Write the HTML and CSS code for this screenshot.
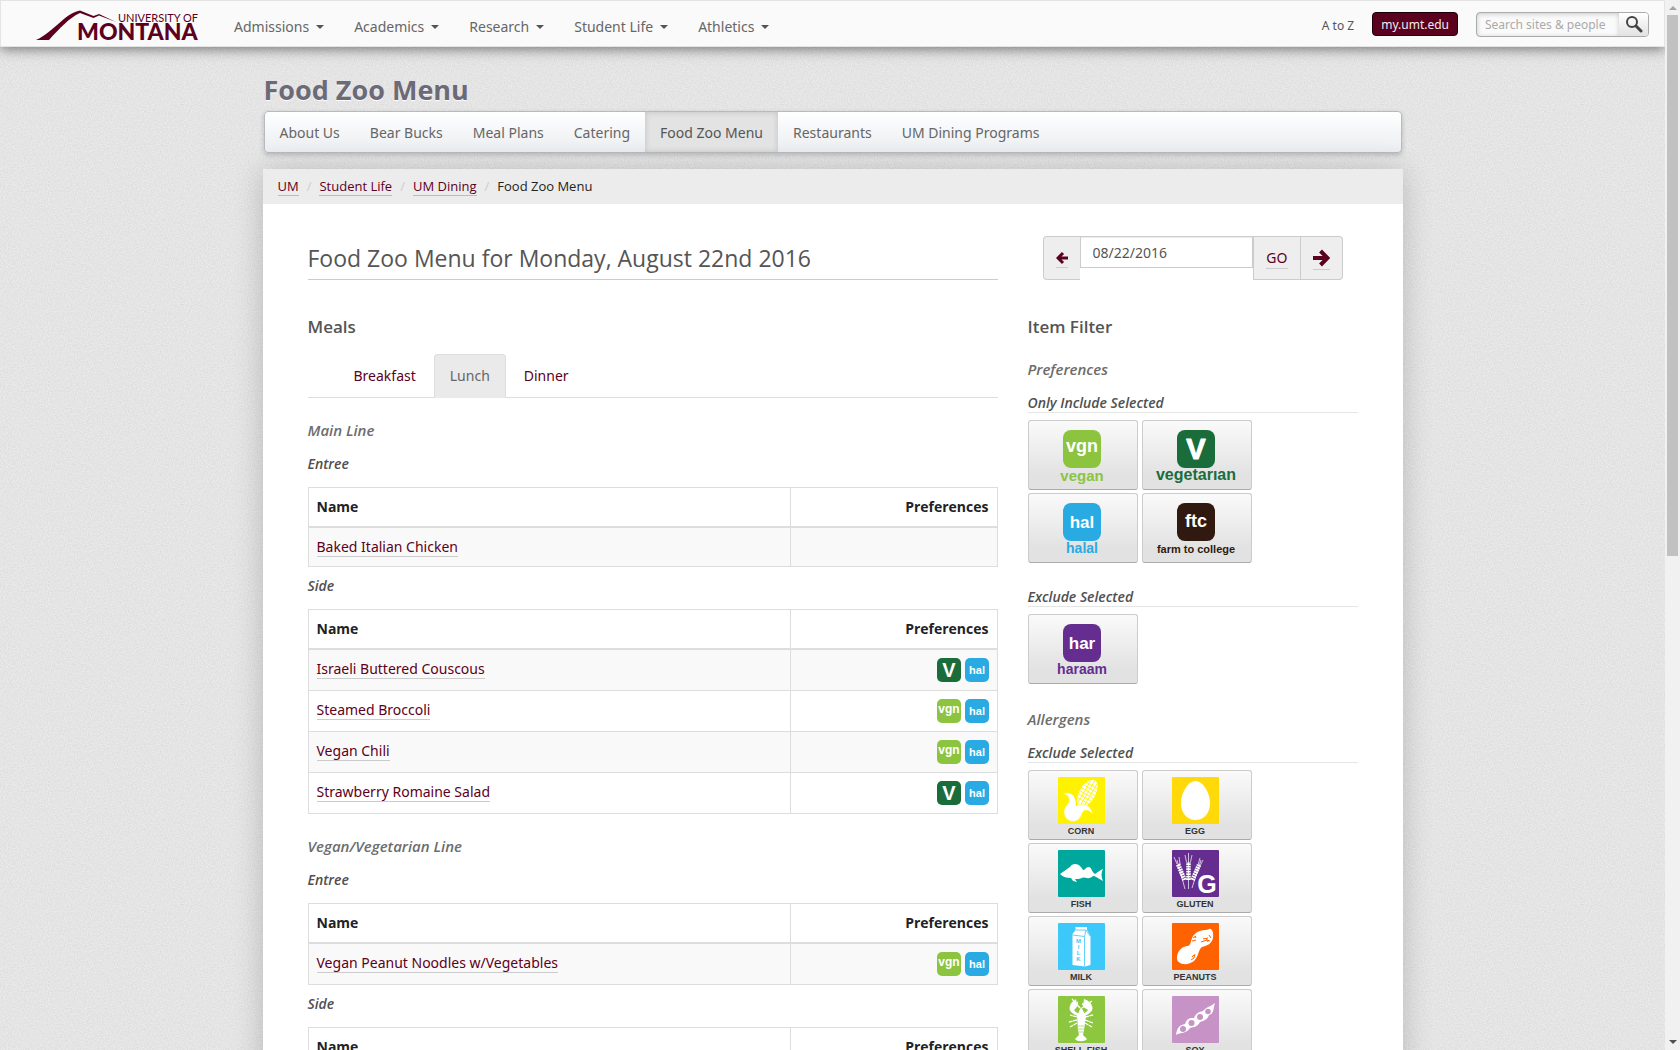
FILE: index.html
```html
<!DOCTYPE html>
<html lang="en">
<head>
<meta charset="utf-8">
<title>Food Zoo Menu</title>
<meta name="viewport" content="width=device-width, initial-scale=1">
<link rel="stylesheet" href="styles.css">
</head>
<body>
<svg class="defs" aria-hidden="true">
  <symbol id="veg" viewBox="0 0 24 24"><rect width="24" height="24" rx="5" fill="#1a6d3a"/><text x="12" y="19" class="g v-sm">V</text></symbol>
  <symbol id="vgn" viewBox="0 0 24 24"><rect width="24" height="24" rx="5" fill="#8cc43f"/><text x="12" y="14" class="g vgn-sm">vgn</text></symbol>
  <symbol id="hal" viewBox="0 0 24 24"><rect width="24" height="24" rx="5" fill="#29aae2"/><text x="12" y="16" class="g hal-sm">hal</text></symbol>
</svg>
<div class="viewport">
  <header class="topbar">
    <a class="logo" href="#" aria-label="University of Montana">
      <svg width="164" height="32" viewBox="0 0 164 32">
        <path fill="#5c0020" d="M0 30C18 22 29 3 44 .5L57.500 6 63 4 80 12 63 5.500 57.500 8 44 3C33 8 24 18 13 30Z"/>
        <text x="82" y="12" class="logo-small">UNIVERSITY OF</text>
        <text x="41" y="30" class="logo-big">MONTANA</text>
      </svg>
    </a>
    <nav class="main-nav">
      <a href="#">Admissions<i class="caret"></i></a>
      <a href="#">Academics<i class="caret"></i></a>
      <a href="#">Research<i class="caret"></i></a>
      <a href="#">Student Life<i class="caret"></i></a>
      <a href="#">Athletics<i class="caret"></i></a>
    </nav>
    <div class="tools">
      <a class="atoz" href="#">A to Z</a>
      <a class="my" href="#">my.umt.edu</a>
      <form class="search">
        <input type="text" placeholder="Search sites &amp; people" aria-label="Search sites and people">
        <button type="button" aria-label="Search"><svg width="18" height="18" viewBox="0 0 18 18"><circle cx="7" cy="7" r="5" fill="none" stroke="#444" stroke-width="2"/><path d="M11 11l5 5" stroke="#444" stroke-width="3" stroke-linecap="round"/></svg></button>
      </form>
    </div>
  </header>

  <div class="container">
    <h1 class="site-title">Food Zoo Menu</h1>
    <nav class="subnav">
      <a href="#">About Us</a><a href="#">Bear Bucks</a><a href="#">Meal Plans</a><a href="#">Catering</a><a href="#" class="active">Food Zoo Menu</a><a href="#">Restaurants</a><a href="#">UM Dining Programs</a>
    </nav>
    <div class="panel">
      <ol class="crumbs">
        <li><a href="#">UM</a></li><li><a href="#">Student Life</a></li><li><a href="#">UM Dining</a></li><li>Food Zoo Menu</li>
      </ol>
      <div class="content">
        <main class="menu">
          <h2 class="page-title">Food Zoo Menu for Monday, August 22nd 2016</h2>
          <h3 class="block-title">Meals</h3>
          <ul class="tabs">
            <li><a href="#">Breakfast</a></li>
            <li><a href="#" class="active">Lunch</a></li>
            <li><a href="#">Dinner</a></li>
          </ul>
          <h4>Main Line</h4>
          <h5>Entree</h5>
          <table>
            <thead><tr><th>Name</th><th class="prefs">Preferences</th></tr></thead>
            <tbody><tr><td><a href="#">Baked Italian Chicken</a></td><td></td></tr></tbody>
          </table>
          <h5>Side</h5>
          <table>
            <thead><tr><th>Name</th><th class="prefs">Preferences</th></tr></thead>
            <tbody>
              <tr><td><a href="#">Israeli Buttered Couscous</a></td><td><div class="marks"><svg><use href="#veg"/></svg><svg><use href="#hal"/></svg></div></td></tr>
              <tr><td><a href="#">Steamed Broccoli</a></td><td><div class="marks"><svg><use href="#vgn"/></svg><svg><use href="#hal"/></svg></div></td></tr>
              <tr><td><a href="#">Vegan Chili</a></td><td><div class="marks"><svg><use href="#vgn"/></svg><svg><use href="#hal"/></svg></div></td></tr>
              <tr><td><a href="#">Strawberry Romaine Salad</a></td><td><div class="marks"><svg><use href="#veg"/></svg><svg><use href="#hal"/></svg></div></td></tr>
            </tbody>
          </table>
          <h4>Vegan/Vegetarian Line</h4>
          <h5>Entree</h5>
          <table>
            <thead><tr><th>Name</th><th class="prefs">Preferences</th></tr></thead>
            <tbody><tr><td><a href="#">Vegan Peanut Noodles w/Vegetables</a></td><td><div class="marks"><svg><use href="#vgn"/></svg><svg><use href="#hal"/></svg></div></td></tr></tbody>
          </table>
          <h5>Side</h5>
          <table>
            <thead><tr><th>Name</th><th class="prefs">Preferences</th></tr></thead>
          </table>
        </main>

        <aside class="side">
          <form class="date">
            <span class="addon first"><a href="#" aria-label="Previous day"><svg width="12" height="14" viewBox="0 0 12 14"><path d="M7 2L2 7l5 5M2.500 7H12" fill="none" stroke="#5c0020" stroke-width="3"/></svg></a></span>
            <input type="text" value="08/22/2016" aria-label="Menu date">
            <span class="addon"><a href="#">GO</a></span>
            <span class="addon last"><a href="#" aria-label="Next day"><svg width="17" height="18" viewBox="0 0 17 18"><path d="M7.500 2l7 7-7 7M14 9H0" fill="none" stroke="#5c0020" stroke-width="4"/></svg></a></span>
          </form>
          <h3 class="block-title">Item Filter</h3>
          <h4>Preferences</h4>
          <h5 class="ruled">Only Include Selected</h5>
          <div class="tiles">
            <button type="button"><svg viewBox="1 1 108 68"><rect x="35" y="10" width="38" height="38" rx="8" fill="#8cc43f"/><text x="54" y="32" class="g t18">vgn</text><text x="54" y="61" class="l t15" fill="#8cc43f">vegan</text></svg></button>
            <button type="button"><svg viewBox="1 1 108 68"><rect x="35" y="10" width="38" height="38" rx="8" fill="#1a6d3a"/><text x="54" y="39" class="g v-lg">V</text><text x="54" y="60" class="l t16" fill="#1a6d3a">vegetarıan</text></svg></button>
            <button type="button"><svg viewBox="1 1 108 68"><rect x="35" y="10" width="38" height="38" rx="8" fill="#29aae2"/><text x="54" y="35" class="g t17">hal</text><text x="54" y="60" class="l t14" fill="#29aae2">halal</text></svg></button>
            <button type="button"><svg viewBox="1 1 108 68"><rect x="35" y="10" width="38" height="38" rx="8" fill="#301a10"/><text x="54" y="34" class="g t18">ftc</text><text x="54" y="60" class="l t11" fill="#301a10">farm to college</text></svg></button>
          </div>
          <h5 class="ruled again">Exclude Selected</h5>
          <div class="tiles">
            <button type="button"><svg viewBox="1 1 108 68"><rect x="35" y="10" width="38" height="38" rx="8" fill="#662d91"/><text x="54" y="35" class="g t17">har</text><text x="54" y="60" class="l t14" fill="#662d91">haraam</text></svg></button>
          </div>
          <h4 class="again">Allergens</h4>
          <h5 class="ruled">Exclude Selected</h5>
          <div class="tiles">
            <button type="button"><svg viewBox="1 1 108 68"><g transform="translate(30 7)"><rect width="47" height="47" rx="1" fill="#fff200"/><g transform="rotate(30 29 15)"><ellipse cx="30" cy="16" rx="8" ry="15" fill="#fff"/><path d="M26.500 3v27M30 1v30M33.500 3v27M22 7h16M21 10.500h17M21 14h18M21 17.500h18M21 21h18M21 24.500h16" stroke="#fff200" stroke-width=".8"/></g><path d="M5 17C12 13 19 19 18 29C24 25 33 27 35 38C30 31 25 33 24 37C22 43 17 46 12 44C6 42 4 34 8 29C13 24 12 18 5 17Z" fill="#fff" stroke="#fff200" stroke-width=".6"/></g><text x="53" y="64" class="l t9">CORN</text></svg></button>
            <button type="button"><svg viewBox="1 1 108 68"><g transform="translate(30 7)"><rect width="47" height="47" rx="1" fill="#ffd90a"/><path d="M23.500 4C31 4 38 16 38 26C38 36 32 43 23.500 43C15 43 9 36 9 26C9 16 16 4 23.500 4Z" fill="#fff"/></g><text x="53" y="64" class="l t9">EGG</text></svg></button>
            <button type="button"><svg viewBox="1 1 108 68"><g transform="translate(30 7)"><rect width="47" height="47" rx="1" fill="#00a79d"/><path d="M2 24C6 21 9 19 12 17C14 13 20 13 23 17L25 20C28 20 27 17 31 17C34 18 33 21 37 24C40 22 42 20 45 19C43 23 43 27 45 31C41 29 39 27 36 26C34 26 33 29 29 28C27 28 26 27 24 28C22 29 19 29 17 29L19 32L15 31L13 28C9 28 5 27 2 24Z" fill="#fff"/></g><text x="53" y="64" class="l t9">FISH</text></svg></button>
            <button type="button"><svg viewBox="1 1 108 68"><g transform="translate(30 7)"><rect width="47" height="47" rx="1" fill="#662d91"/><g stroke="#fff" fill="none"><path d="M12.500 30L6 14M16.500 30L16.500 12M20.500 30L27 15" stroke-width="4.500" stroke-dasharray="1.800 .7" /><path d="M13 39L5 10M5 14L2 7M8 14L7 7M16.500 39V3M14.500 12L13 5M18.500 12L20 5M20 38L29 10M26 15L28 8M28 16L31 10" stroke-width=".7"/></g><text x="35" y="43" class="g t25">G</text></g><text x="53" y="64" class="l t9">GLUTEN</text></svg></button>
            <button type="button"><svg viewBox="1 1 108 68"><g transform="translate(30 7)"><rect width="47" height="47" rx="1" fill="#3cc8f8"/><path d="M17.500 4H29v3L32.500 13V42L27 43.500 14.500 42V11L17.500 7Z" fill="#fff"/><path d="M17.500 7H28L26.500 13.500V43M14.500 12L26.500 13.500M28 7L32 13" fill="none" stroke="#3cc8f8" stroke-width=".8"/><g class="milk"><text x="20.500" y="20">M</text><text x="20.500" y="26">I</text><text x="20.500" y="32">L</text><text x="20.500" y="38">K</text></g></g><text x="53" y="64" class="l t9">MILK</text></svg></button>
            <button type="button"><svg viewBox="1 1 108 68"><g transform="translate(30 7)"><rect width="47" height="47" rx="1" fill="#ff6200"/><path d="M5 35C5 28 10 23 16 23C20 22 18 14 24 10C29 6 34 8 37 6C40 5 42 10 41 15C40 21 34 23 30 24C26 27 27 33 22 38C16 43 5 42 5 35Z" fill="#fff"/><path d="M21 15l3-2M20 18l4-1M23 13l1 2M31 16l5-1M29 19l6-2 3 1M34 15l2 4M37 12l2 3M23 31l-1 4-3 2M20 34l2-2" stroke="#ff6200" stroke-width="1" fill="none"/></g><text x="53" y="64" class="l t9">PEANUTS</text></svg></button>
            <button type="button"><svg viewBox="1 1 108 68"><g transform="translate(30 7)"><rect width="47" height="47" rx="1" fill="#8dc63f"/><g fill="#fff"><path d="M20 20C14 18 10 14 12 10C13 6 16 5 18 3C19 7 18 8 20 5C21 10 17 13 16 14C17 16 20 17 22 19ZM26 20C32 18 36 14 34 10C33 6 29 4 26 3C25 6 27 8 24 7C24 11 29 13 30 14C29 16 26 17 24 19Z"/><path d="M23 11L19 20L20 34L21 39L17 43C19 46 27 46 29 43L25 39L26 34L28 20Z"/></g><path d="M19 21L12 19M19 24L11 26M19 27L12 31M27 21L35 19M27 24L35 27M27 27L34 31M22 12L14 3M24 12L34 5" stroke="#fff" stroke-width="1.300" stroke-dasharray="4 .5"/><path d="M20 30h6M20 33h6M20.500 36h5" stroke="#8dc63f" stroke-width=".6"/></g><text x="53" y="64" class="l t9">SHELL FISH</text></svg></button>
            <button type="button"><svg viewBox="1 1 108 68"><g transform="translate(30 7)"><rect width="47" height="47" rx="1" fill="#c792c6"/><path d="M4 39C5 31 8 29 13 28C15 22 18 22 22 22C24 17 27 16 31 15C34 11 38 11 43 7C41 13 42 18 37 19C35 25 30 25 28 26C25 32 20 31 18 32C14 38 9 36 4 39Z" fill="#fff"/><g fill="#c792c6"><circle cx="11" cy="33" r="3"/><circle cx="19.500" cy="27" r="3"/><circle cx="28" cy="21" r="3"/><circle cx="36" cy="15.500" r="2.800"/></g></g><text x="53" y="64" class="l t9">SOY</text></svg></button>
          </div>
        </aside>
      </div>
    </div>
  </div>
</div>
<div class="scrollbar" aria-hidden="true"><i class="up"></i><div class="track"><div class="thumb"></div></div><i class="down"></i></div>
</body>
</html>
```
FILE: styles.css
```css
* { box-sizing: border-box; }
body {
  margin: 0;
  height: 100vh;
  display: grid;
  grid-template-columns: minmax(0, 1fr) 15px;
  overflow: hidden;
  font: 14px/22px "Noto Sans", "Open Sans", sans-serif;
  color: #222;
  background: #e4e4e4;
}
a { color: #5c0020; text-decoration: none; }
h1, h2, h3, h4, h5, ul, ol { margin: 0; padding: 0; list-style: none; }
h1, h2, h3, h4, h5, th, .crumbs { font-family: "Open Sans", "Noto Sans", sans-serif; }
.defs { display: none; }
.viewport {
  overflow: hidden;
  background: #e4e4e4 url("data:image/svg+xml,%3Csvg xmlns='http://www.w3.org/2000/svg' width='200' height='200'%3E%3Cfilter id='n' x='0' y='0' width='1' height='1' color-interpolation-filters='sRGB'%3E%3CfeTurbulence type='fractalNoise' baseFrequency='.7' numOctaves='2' stitchTiles='stitch'/%3E%3CfeColorMatrix values='.1 0 0 0 .845 .1 0 0 0 .845 .1 0 0 0 .845 0 0 0 0 1'/%3E%3C/filter%3E%3Crect width='200' height='200' filter='url(%23n)'/%3E%3C/svg%3E");
}

/* top bar */
.topbar {
  position: relative;
  display: flex;
  height: 47px;
  padding: 0 15px 0 35px;
  background: #fafafa;
  border: 1px solid #e4e4e4;
  box-shadow: 0 2px 12px rgba(0, 0, 0, .5);
}
.logo { padding-top: 9px; }
.logo svg { display: block; overflow: visible; }
.logo-small { font: 11px Lato, sans-serif; fill: #5c0020; }
.logo-big { font: 900 23px Lato, sans-serif; fill: #5c0020; }
.main-nav { display: flex; margin-left: 19px; }
.main-nav a { display: flex; align-items: center; gap: 7px; padding: 7px 15px 0; color: #666; }
.caret { border: 4px solid transparent; border-top-color: #555; border-bottom: 0; }
.tools { display: flex; align-items: flex-start; margin-left: auto; padding-top: 11px; }
.atoz { font-size: 12px; line-height: 28px; color: #555; margin-right: 18px; }
.my { height: 24px; padding: 0 8px; border: 1px solid #1c0009; border-radius: 4px; background: #5c0020; color: #eee; font-size: 12px; line-height: 24px; margin-right: 18px; }
.search { display: flex; width: 173px; height: 25px; border: 1px solid #aaa; border-radius: 4px; overflow: hidden; background: #fafafa; }
.search input { flex: 1; min-width: 0; border: 0; padding: 0 8px; background: none; font: 12px "Noto Sans", "Open Sans", sans-serif; box-shadow: inset 0 1px 5px rgba(0, 0, 0, .2); }
.search input::placeholder { color: #aaa; }
.search button { width: 29px; border: 0; padding: 2px 0 0; background: linear-gradient(#fff, #e2e2e2); }

.container { width: 1140px; max-width: 100%; margin: 0 auto; }
.site-title { height: 64px; padding: 23px 1px 0; font-size: 27px; line-height: 39px; font-weight: 700; color: #6b6a76; text-shadow: 0 1px 0 #fff; }
.subnav { display: flex; height: 42px; margin: 0 1px; border: 1px solid #b8bbbe; border-radius: 4px; background: linear-gradient(#fff, #ebedf0); box-shadow: 0 2px 5px rgba(0, 0, 0, .2); }
.subnav a { padding: 0 15px; line-height: 42px; color: #666; }
.subnav .active { color: #555; background: #e3e3e3; box-shadow: inset 0 0 6px rgba(0, 0, 0, .15); }

.panel { margin-top: 16px; min-height: 100vh; background: #fff; border-radius: 2px; box-shadow: 0 2px 30px rgba(0, 0, 0, .2); }
.crumbs { display: flex; height: 35px; padding: 0 15px; background: #ececec; border-radius: 2px 2px 0 0; font-size: 13px; line-height: 35px; }
.crumbs li + li::before { content: "/"; padding: 0 8px; color: #ccc; }
.crumbs a { border-bottom: 1px solid #bbb; }
.content { display: grid; grid-template-columns: minmax(0, 690fr) minmax(0, 330fr); gap: 30px; padding: 32px 45px; }

.page-title { height: 44px; padding-top: 6px; font-size: 23px; line-height: 32px; font-weight: 400; color: #555; border-bottom: 1px solid #ccc; }
.block-title { margin-top: 36px; font-size: 17px; line-height: 22px; font-weight: 600; color: #555; }
h4 { margin: 21px 0 12px; font-size: 15px; line-height: 22px; font-style: italic; font-weight: 600; color: #6d6d6d; }
h5 { margin: 8px 0 12px; font-size: 14px; line-height: 22px; font-style: italic; font-weight: 600; color: #505050; }

.tabs { display: flex; gap: 2px; margin-top: 16px; padding-left: 30px; border-bottom: 1px solid #ddd; }
.tabs a { display: block; margin-bottom: -1px; padding: 10px 15px; border: 1px solid transparent; border-radius: 4px 4px 0 0; }
.tabs .active { color: #666; background: #eaeaea; border-color: #ddd; border-bottom: 0; padding-bottom: 11px; }

table { width: 100%; border-collapse: collapse; table-layout: fixed; border: 1px solid #ddd; }
th, td { border: 1px solid #ddd; padding: 8px; text-align: left; vertical-align: top; }
th { border-bottom-width: 2px; font-weight: 700; font-size: 14px; }
.prefs { width: 30%; text-align: right; }
tbody tr:nth-child(odd) { background: #f9f9f9; }
td a { border-bottom: 1px solid #ccc; }
.marks { display: flex; justify-content: flex-end; gap: 4px; }
.marks svg { width: 24px; height: 24px; }

/* date picker */
.date { display: flex; align-items: flex-start; margin: 0 15px; }
.date input { flex: 1; min-width: 0; height: 32px; padding: 0 12px; border: 1px solid #ccc; font: 14px "Noto Sans", "Open Sans", sans-serif; color: #555; box-shadow: inset 0 1px 1px rgba(0, 0, 0, .08); }
.addon { display: flex; align-items: center; justify-content: center; height: 44px; padding: 0 12px; background: #eee; border: 1px solid #ccc; }
.addon a { border-bottom: 1px solid #ccc; line-height: 20px; }
.addon svg { display: block; }
.addon a:has(svg) { padding-bottom: 2px; }
.first { padding-top: 2px; border-right: 0; border-radius: 4px 0 0 4px; }
.last { padding-top: 2px; border-left: 0; border-radius: 0 4px 4px 0; }

.side h4 { margin: 20px 0 11px; }
.side h4.again { margin-top: 24px; }
.side .ruled { height: 22px; margin-bottom: 7px; line-height: 24px; border-bottom: 1px solid #e5e5e5; }
.side .again { margin-top: 22px; }
.tiles { display: flex; flex-wrap: wrap; gap: 3px 4px; width: 224px; }
.tiles button { width: 110px; height: 70px; padding: 0; border: 1px solid #ccc; border-bottom-color: #aaa; border-radius: 3px; background: linear-gradient(#fafafa, #e2e2e2 80%); }
.tiles svg { display: block; width: 108px; height: 68px; }

/* lettering inside the badges */
.g { font-family: "Liberation Sans", Arial, sans-serif; font-weight: 700; fill: #fff; text-anchor: middle; }
.l { font-family: "Liberation Sans", Arial, sans-serif; font-weight: 700; text-anchor: middle; }
.v-sm { font-size: 20px; }
.vgn-sm { font-size: 12px; }
.hal-sm { font-size: 11px; }
.v-lg { font-size: 29px; stroke: #fff; stroke-width: 1px; stroke-linejoin: round; }
.t9 { font-size: 9px; fill: #333; }
.t11 { font-size: 11px; }
.t14 { font-size: 14px; }
.t15 { font-size: 15px; }
.t16 { font-size: 16px; }
.t17 { font-size: 17px; }
.t18 { font-size: 18px; }
.t25 { font-size: 25px; }
.milk { font: 700 6px "Liberation Sans", Arial, sans-serif; fill: #3cc8f8; text-anchor: middle; }

.scrollbar { display: flex; flex-direction: column; align-items: center; padding: 6px 0; background: #f1f1f1; }
.track { flex: 1; width: 11px; margin: 5px 0; }
.thumb { height: 53%; background: #c1c1c1; }
.up { border: 4px solid transparent; border-bottom-color: #a3a3a3; border-top: 0; }
.down { border: 4px solid transparent; border-top-color: #505050; border-bottom: 0; }
```
